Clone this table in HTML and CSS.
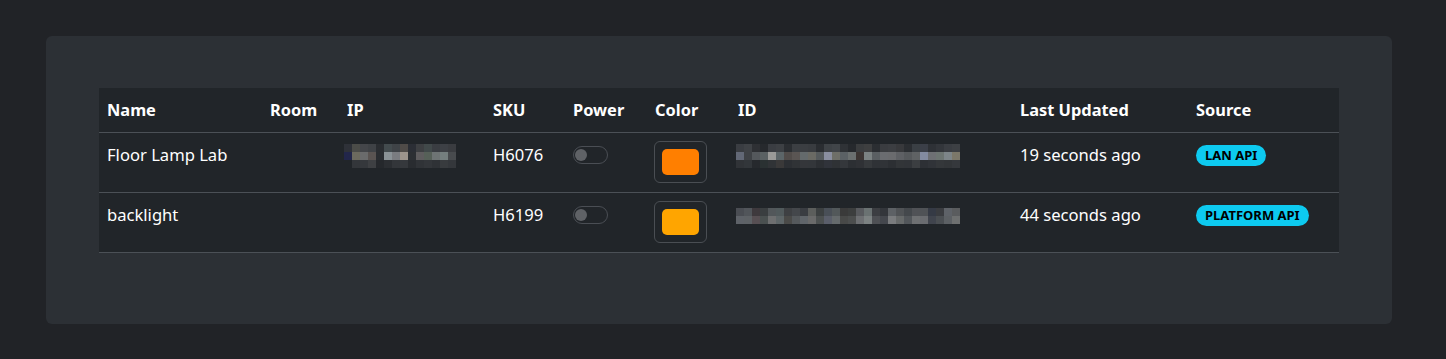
FILE: index.html
```html
<!DOCTYPE html>
<html lang="en">
<head>
<meta charset="utf-8">
<title>Devices</title>
<link rel="stylesheet" href="styles.css">
</head>
<body>
  <main class="page">
    <section class="card">
      <table class="devices">
        <colgroup>
          <col class="c-name"><col class="c-room"><col class="c-ip"><col class="c-sku"><col class="c-power">
          <col class="c-color"><col class="c-id"><col class="c-updated"><col class="c-source">
        </colgroup>
        <thead>
          <tr>
            <th>Name</th><th>Room</th><th>IP</th><th>SKU</th><th>Power</th>
            <th>Color</th><th>ID</th><th>Last Updated</th><th>Source</th>
          </tr>
        </thead>
        <tbody>
          <tr>
            <td>Floor Lamp Lab</td>
            <td></td>
            <td><span class="redacted redacted-ip" aria-label="hidden address"></span></td>
            <td>H6076</td>
            <td><span class="switch"><span class="knob"></span></span></td>
            <td><span class="swatch-btn"><span class="swatch swatch-dark-orange"></span></span></td>
            <td><span class="redacted redacted-id1" aria-label="hidden id"></span></td>
            <td>19 seconds ago</td>
            <td><span class="badge">LAN API</span></td>
          </tr>
          <tr>
            <td>backlight</td>
            <td></td>
            <td></td>
            <td>H6199</td>
            <td><span class="switch"><span class="knob"></span></span></td>
            <td><span class="swatch-btn"><span class="swatch swatch-orange"></span></span></td>
            <td><span class="redacted redacted-id2" aria-label="hidden id"></span></td>
            <td>44 seconds ago</td>
            <td><span class="badge">PLATFORM API</span></td>
          </tr>
        </tbody>
      </table>
    </section>
  </main>
</body>
</html>
```
FILE: styles.css
```css
html, body {
  margin: 0;
  padding: 0;
  background: #212327;
}

body {
  font-family: "Noto Sans", "Open Sans", sans-serif;
  font-size: 16.6px;
  line-height: 24px;
  color: #fff;
}

.page {
  padding: 36px 54px 35px 46px;
}

.card {
  background: #2c3035;
  border-radius: 6px;
  padding: 52px 53px 71px;
}

.devices {
  width: 1240px;
  table-layout: fixed;
  border-collapse: collapse;
  background: #212529;
}

.c-name { width: 163px; }
.c-room { width: 77px; }
.c-ip { width: 146px; }
.c-sku { width: 80px; }
.c-power { width: 82px; }
.c-color { width: 83px; }
.c-id { width: 282px; }
.c-updated { width: 176px; }
.c-source { width: 151px; }

.devices th {
  text-align: left;
  font-weight: 700;
  font-size: 16.4px;
  padding: 10px 8px;
  border-bottom: 1px solid #4b5056;
  white-space: nowrap;
}

.devices td {
  padding: 8px 8px 9px;
  line-height: 28px;
  vertical-align: top;
  border-bottom: 1px solid #4b5056;
  white-space: nowrap;
}

/* power toggle (off) */
.switch {
  display: block;
  box-sizing: border-box;
  width: 35px;
  height: 18px;
  margin-top: 5px;
  border: 1px solid #4a4e54;
  border-radius: 9px;
  padding: 2px 0 0 1px;
}

.knob {
  display: block;
  width: 12px;
  height: 12px;
  border-radius: 50%;
  background: #5f6266;
}

/* colour picker button */
.swatch-btn {
  display: block;
  box-sizing: border-box;
  width: 53px;
  height: 42px;
  border: 1px solid #4a4e53;
  border-radius: 6px;
  padding: 7px;
  margin-left: -1px;
}

.swatch {
  display: block;
  width: 37px;
  height: 26px;
  border-radius: 5px;
}

.swatch-dark-orange { background: #ff7f00; }
.swatch-orange { background: #ffa500; }

/* source badge */
.badge {
  display: inline-block;
  background: #0dcaf0;
  color: #000;
  font-size: 13px;
  font-weight: 700;
  line-height: 13px;
  padding: 4px 9px;
  border-radius: 11px;
  vertical-align: 1px;
}

/* pixelated placeholders for hidden values */
.redacted {
  display: block;
  background-repeat: no-repeat;
}

.redacted-ip {
  width: 112px;
  height: 24px;
  margin: 3px 0 0 -3px;
  background-size: 112px 8px;
  background-position: 0 0, 0 8px, 0 16px;
  background-image:
    linear-gradient(90deg, #2e3138 0 8px, #4b4c48 0 16px, #44464a 0 24px, #3f4246 0 32px, #2a2d31 0 40px, #434b4e 0 48px, #3f4347 0 56px, #4f4b48 0 64px, #2b2e35 0 72px, #3d3f42 0 80px, #41494a 0 88px, #3a3d42 0 96px, #3d4045 0 104px, #3a3c40 0 112px),
    linear-gradient(90deg, #22264a 0 8px, #6c6a5e 0 16px, #6a6b6c 0 24px, #5a5452 0 32px, #2a2d31 0 40px, #8a9296 0 48px, #7a7c80 0 56px, #9c948c 0 64px, #2c2f33 0 72px, #5e5c5e 0 80px, #566058 0 88px, #6e7474 0 96px, #747e7e 0 104px, #484b4e 0 112px),
    linear-gradient(90deg, #212529 0 8px, #33363a 0 16px, #35383c 0 24px, #3e4043 0 32px, #25282c 0 40px, #2b2e32 0 48px, #33363a 0 56px, #35383c 0 64px, #292c30 0 72px, #303337 0 80px, #33363a 0 88px, #2f3236 0 96px, #383b3e 0 104px, #34373b 0 112px);
}

.redacted-id1 {
  width: 224px;
  height: 24px;
  margin: 3px 0 0 -2px;
  background-size: 224px 8px;
  background-position: 0 0, 0 8px, 0 16px;
  background-image:
    linear-gradient(90deg, #3a3d42 0 8px, #3f4246 0 16px, #2e3034 0 24px, #26292d 0 32px, #3a3d42 0 40px, #3d4044 0 48px, #2b2e32 0 56px, #3c3f43 0 64px, #3b3e42 0 72px, #393c40 0 80px, #2a2d31 0 88px, #3e4246 0 96px, #414549 0 104px, #2f3236 0 112px, #26292d 0 120px, #3a3c3e 0 128px, #3e3f40 0 136px, #2b2e32 0 144px, #3a3c40 0 152px, #3c3e42 0 160px, #38393c 0 168px, #2b2e32 0 176px, #3a3f44 0 184px, #3b3f48 0 192px, #2e3136 0 200px, #33363b 0 208px, #3a3d42 0 216px, #3d4044 0 224px),
    linear-gradient(90deg, #626876 0 8px, #3f4246 0 16px, #54585c 0 24px, #5a6163 0 32px, #9a9a98 0 40px, #5c6568 0 48px, #514c4a 0 56px, #5a5553 0 64px, #646a6c 0 72px, #6a6a64 0 80px, #555a5c 0 88px, #8a8fa0 0 96px, #6e6f68 0 104px, #5b6165 0 112px, #6b7070 0 120px, #3c3533 0 128px, #7b8282 0 136px, #5a5f62 0 144px, #6a6c70 0 152px, #6a6b6e 0 160px, #5e6064 0 168px, #56595c 0 176px, #5f6264 0 184px, #838ba0 0 192px, #6e7074 0 200px, #6d7572 0 208px, #7d8589 0 216px, #7c786a 0 224px),
    linear-gradient(90deg, #303337 0 8px, #32363a 0 16px, #26292d 0 24px, #2a3132 0 32px, #303336 0 40px, #3a3939 0 48px, #2c2f33 0 56px, #303336 0 64px, #34363a 0 72px, #33363a 0 80px, #2c2f33 0 88px, #30333a 0 96px, #2f3235 0 104px, #34373b 0 112px, #2c2f33 0 120px, #2f3135 0 128px, #36393c 0 136px, #2f3236 0 144px, #303337 0 152px, #2c2f33 0 160px, #323538 0 168px, #313438 0 176px, #3b3e41 0 184px, #2d3035 0 192px, #303338 0 200px, #34373a 0 208px, #323538 0 216px, #35383c 0 224px);
}

.redacted-id2 {
  width: 224px;
  height: 16px;
  margin: 7px 0 0 -2px;
  background-size: 224px 8px;
  background-position: 0 0, 0 8px;
  background-image:
    linear-gradient(90deg, #4a4d53 0 8px, #51555a 0 16px, #3e393d 0 24px, #3a3e40 0 32px, #52575a 0 40px, #515a5c 0 48px, #3e4043 0 56px, #44474b 0 64px, #3a3d42 0 72px, #5c5e5c 0 80px, #3c4041 0 88px, #494f57 0 96px, #52585a 0 104px, #3a3a3a 0 112px, #3c3e3e 0 120px, #585a5e 0 128px, #6a7272 0 136px, #3c3e42 0 144px, #33363b 0 152px, #5d6165 0 160px, #505356 0 168px, #44484c 0 176px, #505256 0 184px, #4f5256 0 192px, #353a45 0 200px, #3a3c40 0 208px, #5e6268 0 216px, #5a5c5e 0 224px),
    linear-gradient(90deg, #5e6268 0 8px, #5e6266 0 16px, #574f53 0 24px, #4a5050 0 32px, #6e6f70 0 40px, #5e6668 0 48px, #4a4a48 0 56px, #55595c 0 64px, #60656a 0 72px, #6a6a6a 0 80px, #4c5050 0 88px, #5a5e6a 0 96px, #656a6c 0 104px, #484948 0 112px, #4c4e4e 0 120px, #6d6f72 0 128px, #7c8282 0 136px, #4e5054 0 144px, #44474d 0 152px, #7a7c7e 0 160px, #676a6a 0 168px, #52565a 0 176px, #6e7072 0 184px, #6a6c70 0 192px, #40444d 0 200px, #4a4e52 0 208px, #5c6064 0 216px, #6e7070 0 224px);
}
```
